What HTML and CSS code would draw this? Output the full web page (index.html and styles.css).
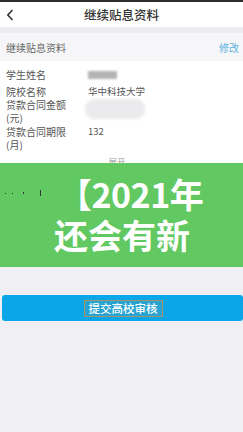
FILE: index.html
```html
<!DOCTYPE html>
<html lang="zh-CN">
<head>
<meta charset="utf-8">
<title>继续贴息资料</title>
<link rel="stylesheet" href="styles.css">
</head>
<body>
<div class="page">
  <div class="topline"></div>
  <header class="navbar">
    <svg class="back" width="8" height="12" viewBox="0 0 8 12"><path d="M6.5 1 L1.8 6 L6.5 11" fill="none" stroke="#333" stroke-width="1.6"/></svg>
    <div class="title">继续贴息资料</div>
    <div></div>
  </header>
  <div class="gap"></div>
  <div class="section-head">
    <span class="section-title">继续贴息资料</span>
    <span class="edit">修改</span>
  </div>
  <div class="card">
    <div class="row r1">
      <div class="label">学生姓名</div>
      <div class="value"><div class="blur-name"></div></div>
    </div>
    <div class="row r2">
      <div class="label">院校名称</div>
      <div class="value">华中科技大学</div>
    </div>
    <div class="row r3">
      <div class="label">贷款合同金额<br>(元)</div>
      <div class="value"><div class="blur-amount"></div></div>
    </div>
    <div class="row r4">
      <div class="label">贷款合同期限<br>(月)</div>
      <div class="value">132</div>
    </div>
    <div class="expand">展开 <span class="chev">⌄</span></div>
  </div>
  <div class="banner">
    <div class="marks"><i class="m1"></i><i class="m2"></i><i class="m3"></i><i class="m4"></i></div>
    <div class="banner-text">
      <div class="l1">【2021年</div>
      <div class="l2">还会有新</div>
    </div>
  </div>
  <div class="btn-area">
    <div class="btn"><span class="btn-label">提交高校审核</span></div>
  </div>
</div>
</body>
</html>
```
FILE: styles.css
```css
* { box-sizing: border-box; }
html, body { margin: 0; padding: 0; }
body {
  background: #efeff4;
  font-family: "Noto Sans CJK SC", "Noto Sans", sans-serif;
  width: 243px;
  height: 432px;
  overflow: hidden;
}
.page { width: 243px; }
.topline { height: 2px; background: #2e2e2e; }
.navbar {
  height: 25px;
  background: #fff;
  display: grid;
  grid-template-columns: 30px 1fr 30px;
  align-items: center;
}
.back { margin-left: 6px; }
.title {
  text-align: center;
  font-size: 12.5px;
  font-weight: 500;
  color: #333;
  line-height: 25px;
}
.gap { height: 6px; background: #ececf1; }
.section-head {
  height: 28px;
  background: #f6f6f8;
  display: flex;
  justify-content: space-between;
  align-items: center;
  padding: 0 4px 0 6px;
  font-size: 10px;
  color: #666;
}
.edit { color: #5cb2df; }
.card {
  background: #fff;
  height: 102px;
  overflow: hidden;
  padding-top: 7px;
  font-size: 10px;
  line-height: 13px;
  color: #555;
}
.row { display: flex; }
.label { width: 62px; margin-left: 6px; }
.value { margin-left: 20px; font-size: 9.5px; }
.r1 { margin-bottom: 3.5px; }
.r3 { margin-bottom: 1px; }
.blur-name {
  width: 29px; height: 8px; margin-top: 3px;
  background: #b4b4b4; filter: blur(1.2px);
}
.blur-amount {
  width: 60px; height: 20px; margin-left: -3px; margin-top: 1px;
  background: #ebebed; border-radius: 9px; filter: blur(1.5px);
}
.expand {
  margin-top: 5px;
  text-align: center;
  font-size: 8.5px;
  line-height: 11px;
  color: #999;
}
.chev { font-size: 8px; }
.banner {
  height: 104px;
  background: #62c962;
  display: flex;
  align-items: flex-start;
}
.marks {
  width: 50px;
  display: flex;
  align-items: center;
  gap: 6px;
  padding-left: 5px;
  margin-top: 27px;
}
.marks i { display: block; background: #333; }
.m1 { width: 1px; height: 1px; }
.m2 { width: 1px; height: 1px; }
.m3 { width: 1px; height: 2px; margin-left: 4px; }
.m4 { width: 1px; height: 6px; margin-left: 10px; }
.banner-text {
  padding-top: 10px;
  margin-left: 4px;
  color: #fff;
  font-weight: 700;
  font-size: 34px;
  line-height: 41px;
  white-space: nowrap;
}
.l1 { margin-left: 4px; letter-spacing: -0.5px; }
.btn-area { padding: 28px 0 0 2px; }
.btn {
  height: 26px;
  background: #0ba6e7;
  border-radius: 3px;
  display: flex;
  justify-content: center;
  align-items: center;
}
.btn-label {
  border: 1.5px solid #a3946c;
  background: #27a4d2;
  color: #fff;
  font-size: 11.5px;
  line-height: 15px;
  padding: 0 4px;
  margin-left: 1px;
  font-weight: 500;
}
```
